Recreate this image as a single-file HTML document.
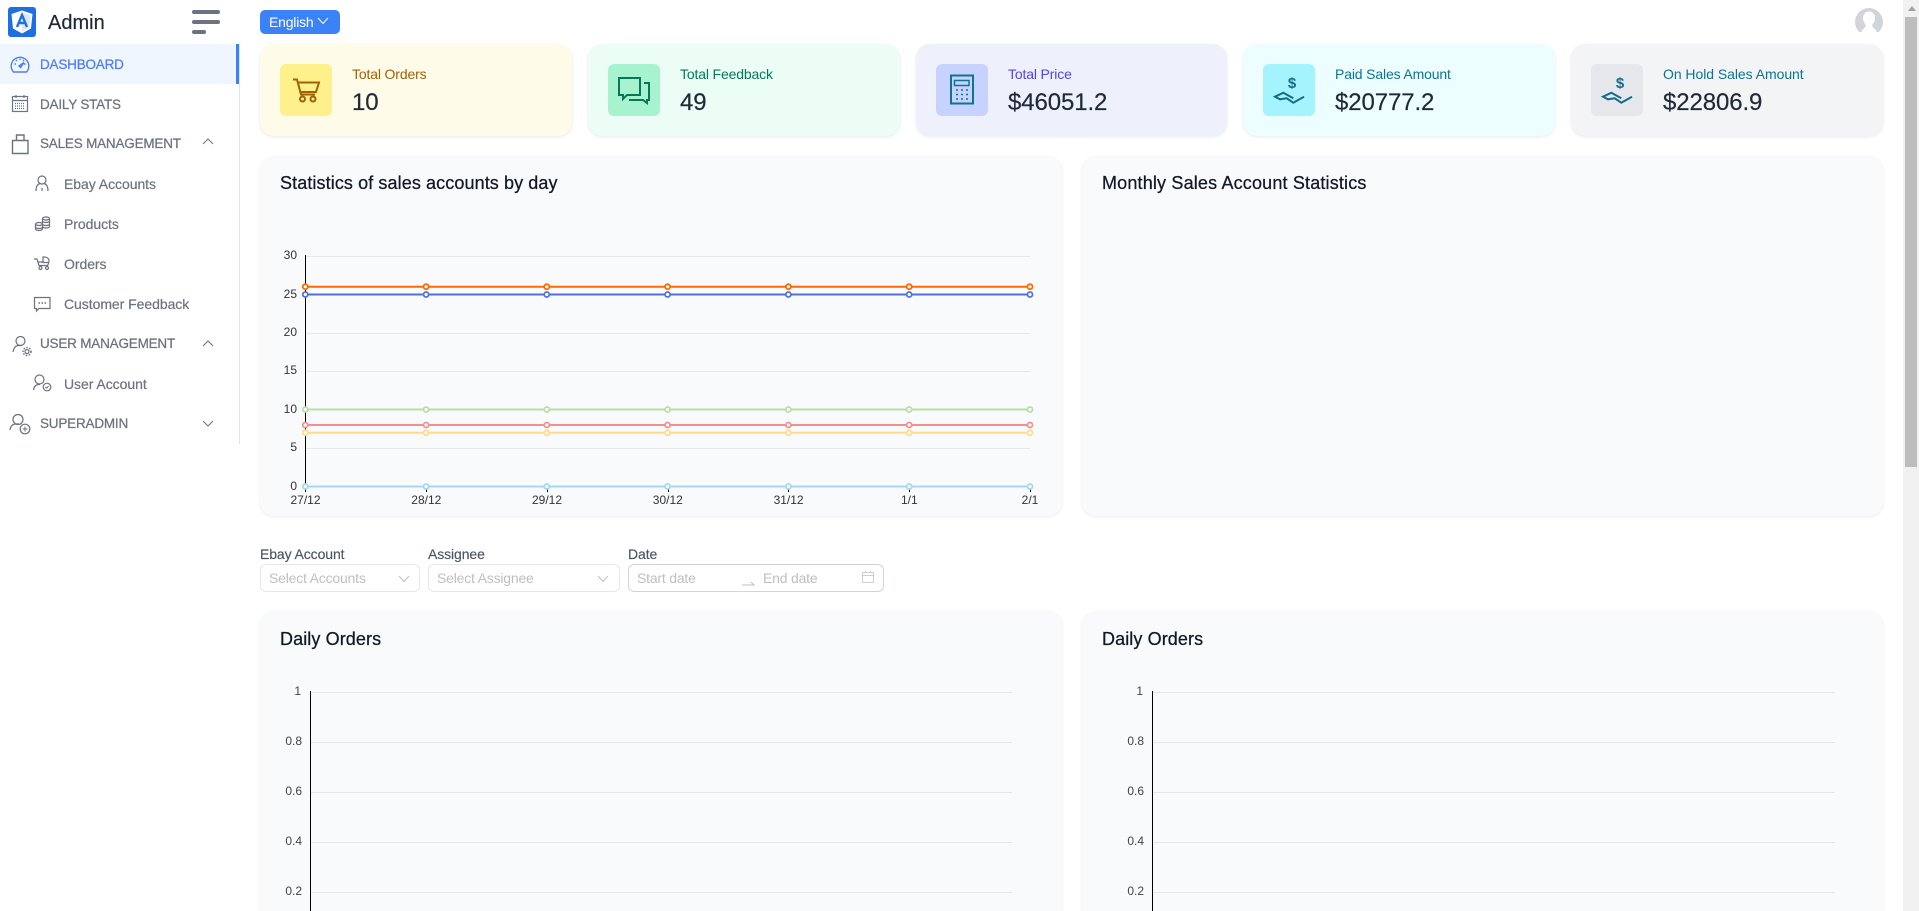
<!DOCTYPE html>
<html lang="en"><head><meta charset="utf-8"><title>Admin Dashboard</title>
<style>
*{box-sizing:border-box}
html,body{margin:0;padding:0;width:1919px;height:911px;overflow:hidden;background:#fff;font-family:"Liberation Sans",sans-serif;color:#1f2937}
#root{position:relative;width:1919px;height:911px;overflow:hidden;background:#fff}
.a{position:absolute}
.t{position:absolute;white-space:nowrap;line-height:20px;font-size:14px}
.nav{color:#6b7280;font-size:13.5px;letter-spacing:-.2px;-webkit-text-stroke:.25px}
.sub{color:#6b7280;font-size:14px;letter-spacing:-.05px;-webkit-text-stroke:.2px}
.card{position:absolute;top:44px;height:92px;border-radius:14px;box-shadow:0 1px 3px rgba(0,0,0,.09)}
.ic{position:absolute;left:20px;top:20px;width:52px;height:52px;border-radius:6px}
.ic svg{position:absolute;left:0;top:0}
.lb{position:absolute;left:92px;top:20px;font-size:14px;line-height:20px;white-space:nowrap;letter-spacing:-.15px}
.vl{position:absolute;left:92px;top:45px;font-size:24px;line-height:28px;white-space:nowrap;color:#1f2937;letter-spacing:-.1px;-webkit-text-stroke:.2px}
.panel{position:absolute;background:#f9fafb;border-radius:14px;box-shadow:0 1px 3px rgba(0,0,0,.08)}
.title{position:absolute;font-size:18px;line-height:24px;font-weight:400;color:#111827;white-space:nowrap;letter-spacing:.1px;-webkit-text-stroke:.25px}
.fl{position:absolute;top:544px;font-size:14px;line-height:20px;color:#4b5563;white-space:nowrap;letter-spacing:-.1px;-webkit-text-stroke:.15px}
.inp{position:absolute;top:564px;height:28px;border:1px solid #e5e7eb;border-radius:6px;background:#fff}
.ph{position:absolute;top:3px;font-size:14px;line-height:20px;color:#bfbfbf;white-space:nowrap;letter-spacing:-.2px}
svg{display:block;overflow:visible}
svg text{font-family:"Liberation Sans",sans-serif}
</style></head><body>
<div id="root">

<!-- Sidebar -->
<div class="a" style="left:239px;top:44px;width:1px;height:400px;background:#dbe5f5"></div>
<div class="a" style="left:0;top:44px;width:239px;height:40px;background:#eff6ff"></div>
<div class="a" style="left:236px;top:44px;width:3px;height:40px;background:#3b82f6"></div>

<svg class="a" style="left:8px;top:7px" width="28" height="30" viewBox="0 0 28 30">
<rect width="28" height="30" rx="3" fill="#1d6fe3"/>
<path d="M14 3.500 24.500 7 23 21.500 14 26.500 5 21.500 3.500 7Z" fill="#fff"/>
<path d="M14 5.500 22.500 8.500 21.200 20.300 14 24.300Z" fill="#dbe8fb"/>
<path d="M9 20 14 8l5 12M10.800 16h6.400" fill="none" stroke="#1d6fe3" stroke-width="2.400"/>
</svg>
<div class="t" style="left:48px;top:11px;font-size:20px;line-height:24px;color:#1f2937;-webkit-text-stroke:.2px">Admin</div>
<div class="a" style="left:192px;top:10px;width:28px;height:4px;border-radius:2px;background:#6b7280"></div>
<div class="a" style="left:192px;top:20px;width:28px;height:4px;border-radius:2px;background:#6b7280"></div>
<div class="a" style="left:192px;top:30px;width:14px;height:4px;border-radius:2px;background:#6b7280"></div>

<div class="t nav" style="left:40px;top:55px;color:#4f7cf7">DASHBOARD</div>
<div class="t nav" style="left:40px;top:95px">DAILY STATS</div>
<div class="t nav" style="left:40px;top:134px">SALES MANAGEMENT</div>
<div class="t sub" style="left:64px;top:174px">Ebay Accounts</div>
<div class="t sub" style="left:64px;top:214px">Products</div>
<div class="t sub" style="left:64px;top:254px">Orders</div>
<div class="t sub" style="left:64px;top:294px">Customer Feedback</div>
<div class="t nav" style="left:40px;top:334px">USER MANAGEMENT</div>
<div class="t sub" style="left:64px;top:374px">User Account</div>
<div class="t nav" style="left:40px;top:414px">SUPERADMIN</div>

<svg class="a" style="left:0;top:0" width="240" height="445" viewBox="0 0 240 445" fill="none" stroke="#6b7280" stroke-width="1.200">
<!-- gauge -->
<g stroke="#4f7cf7" stroke-width="1.400"><path d="M13.500 72a8.800 8.800 0 1 1 13 0Z"/><path d="M14.500 64h1.500M24 64h1.500M20 58.500v1.500M16 60l1 1M24 60l-1 1"/><path d="M19 66l5-3.500-3.500 5Z" fill="#4f7cf7"/></g>
<!-- calendar -->
<rect x="12.500" y="96.500" width="15" height="15"/><path d="M12.500 100.500h15M16 95v3M24 95v3"/><path d="M15 103.500h10M15 106h10M15 108.500h10" stroke-dasharray="1 1"/>
<!-- bag -->
<path d="M12.500 140.500h15.500v13h-15.500ZM16.500 140.500v-5.500h7.500v5.500" stroke-width="1.400"/>
<!-- chevrons -->
<path d="M203 144l5-5 5 5M203 346 208 341l5 5M203 421l5 5 5-5" stroke-width="1"/>
<!-- ebay user -->
<circle cx="42" cy="180" r="4"/><path d="M36 191c0-5 2-7 4-7.500M48 191c0-5-2-7-4-7.500M42 188v3" stroke-width="1.200"/>
<!-- products coins -->
<ellipse cx="46" cy="218.500" rx="3.500" ry="1.500"/><path d="M42.500 218.500v8c0 .8 1.500 1.500 3.500 1.500s3.500-.7 3.500-1.500v-8M42.500 221c0 .8 1.500 1.500 3.500 1.500s3.500-.7 3.500-1.500M42.500 224c0 .8 1.500 1.500 3.500 1.500s3.500-.7 3.500-1.500"/>
<ellipse cx="39" cy="224" rx="3.500" ry="1.500"/><path d="M35.500 224v5c0 .8 1.500 1.500 3.500 1.500s3.500-.7 3.500-1.500v-5M35.500 227c0 .8 1.500 1.500 3.500 1.500s3.500-.7 3.500-1.500"/>
<!-- orders stroller -->
<path d="M34 259h3l2 6.500h8.500c1-1.500 1.500-3 1.500-5.500a5 4 0 0 0-5-3h-1v5.500h6M38.200 262h5.800"/><circle cx="40.500" cy="268" r="1.500"/><circle cx="47" cy="268" r="1.500"/>
<!-- chat -->
<path d="M34.500 297.500h15.500v11h-11l-2.500 2.500v-2.500h-2Z" stroke-width="1.200"/><path d="M38.500 303h1.500M41.500 303h1.500M44.500 303h1.500" stroke-width="1.500"/>
<!-- user gear -->
<circle cx="20.500" cy="341" r="4.500"/><path d="M13 352c.5-4 2.500-6 5-6.500h4"/><circle cx="27" cy="351.500" r="2"/><circle cx="27" cy="351.500" r="4" stroke-dasharray="1.500 1.500" stroke-width="1.500"/>
<!-- user check -->
<circle cx="39.500" cy="379.500" r="4.500"/><path d="M33.500 390c.5-3.500 2-5 4.500-5.500h2"/><circle cx="47" cy="387" r="3.800"/><path d="M45.300 387l1.300 1.200 2-2.200" stroke-width="1"/>
<!-- user plus -->
<circle cx="18" cy="419.500" r="5"/><path d="M10 430c.5-4 2.500-5.500 5-6h4"/><circle cx="25" cy="429" r="4.800"/><path d="M25 426.500v5M22.500 429h5" stroke-width="1"/>
</svg>

<!-- Header -->
<div class="a" style="left:260px;top:10px;width:80px;height:24px;border-radius:5px;background:#3b82f6"></div>
<div class="t" style="left:269px;top:12px;color:#fff;letter-spacing:-.2px">English</div>
<svg class="a" style="left:317px;top:17px" width="12" height="8" viewBox="0 0 12 8" fill="none" stroke="#fff"><path d="M1 1l5 5.500 5-5.500"/></svg>
<svg class="a" style="left:1855px;top:8px" width="28" height="28" viewBox="0 0 28 28"><circle cx="14" cy="14" r="14" fill="#d1d5db"/><path d="M14 3.500c4 0 6 3 6 6.500 0 3-1.500 5-2.500 6.500-.8 1.500.5 3.500 3.500 5.500l1 4H6l1-4c3-2 4.300-4 3.500-5.500C9.500 15 8 13 8 10c0-3.500 2-6.500 6-6.500Z" fill="#fff"/><path d="M0 24h28v4H0Z" fill="#fff"/></svg>

<!-- Stat cards -->
<div class="card" style="left:260px;width:312px;background:#fefbe8">
 <div class="ic" style="background:#fef08a"><svg width="52" height="52" viewBox="0 0 52 52" fill="none" stroke="#a16207" stroke-width="2"><path d="M13 15.500h4l4 15h14M18 18.500h21l-3 9.500H20.500"/><circle cx="22.500" cy="35" r="2.500"/><circle cx="33" cy="35" r="2.500"/></svg></div>
 <div class="lb" style="color:#a16207">Total Orders</div><div class="vl">10</div>
</div>
<div class="card" style="left:588px;width:312px;background:#ecfdf5">
 <div class="ic" style="background:#a7f3d0"><svg width="52" height="52" viewBox="0 0 52 52" fill="none" stroke="#047857" stroke-width="2"><path d="M11 14h21v17H19l-4 4v-4h-4Z"/><path d="M36 19h5v17h-2v3l-4-3H21"/></svg></div>
 <div class="lb" style="color:#047857">Total Feedback</div><div class="vl">49</div>
</div>
<div class="card" style="left:916px;width:311px;background:#eef0fc">
 <div class="ic" style="background:#c7d2fe"><svg width="52" height="52" viewBox="0 0 52 52" fill="none" stroke="#0e7490" stroke-width="2"><rect x="15" y="11.500" width="22" height="28"/><rect x="18.500" y="16.500" width="14.500" height="5" stroke-width="1.500"/><path d="M20 26h2M25 26h2M30 26h2M20 30.500h2M25 30.500h2M30 30.500h2M20 35h2M25 35h2M30 35h2" stroke-width="1.600"/></svg></div>
 <div class="lb" style="color:#4f46e5">Total Price</div><div class="vl">$46051.2</div>
</div>
<div class="card" style="left:1243px;width:312px;background:#ecfeff">
 <div class="ic" style="background:#a5f3fc"><svg width="52" height="52" viewBox="0 0 52 52" fill="none" stroke="#146c8c" stroke-width="2"><path d="M30.300 34.300 20.300 28.700 12 32.700 17 35.300 23.700 34.300 30.300 38.700 41 32.700"/><text x="29" y="24" font-size="15" font-weight="700" text-anchor="middle" fill="#146c8c" stroke="none">$</text></svg></div>
 <div class="lb" style="color:#0e7490">Paid Sales Amount</div><div class="vl">$20777.2</div>
</div>
<div class="card" style="left:1571px;width:312px;background:#f3f4f6">
 <div class="ic" style="background:#e5e7eb"><svg width="52" height="52" viewBox="0 0 52 52" fill="none" stroke="#146c8c" stroke-width="2"><path d="M30.300 34.300 20.300 28.700 12 32.700 17 35.300 23.700 34.300 30.300 38.700 41 32.700"/><text x="29" y="24" font-size="15" font-weight="700" text-anchor="middle" fill="#146c8c" stroke="none">$</text></svg></div>
 <div class="lb" style="color:#0e7490;letter-spacing:-.05px">On Hold Sales Amount</div><div class="vl">$22806.9</div>
</div>

<!-- Chart panels -->
<div class="panel" style="left:260px;top:156px;width:802px;height:360px"></div>
<div class="panel" style="left:1082px;top:156px;width:801px;height:360px"></div>
<div class="title" style="left:280px;top:171px;letter-spacing:.1px">Statistics of sales accounts by day</div>
<div class="title" style="left:1102px;top:171px;letter-spacing:.17px">Monthly Sales Account Statistics</div>

<svg class="a" style="left:260px;top:156px" width="802" height="360" viewBox="260 156 802 360" fill="none">
<defs>
<g id="pts"><circle cx="305.300" cy="0" r="2.500"/><circle cx="426.100" cy="0" r="2.500"/><circle cx="546.800" cy="0" r="2.500"/><circle cx="667.600" cy="0" r="2.500"/><circle cx="788.400" cy="0" r="2.500"/><circle cx="909.200" cy="0" r="2.500"/><circle cx="1030" cy="0" r="2.500"/></g>
</defs>
<path d="M305 256.500H1030M305 333.500H1030M305 371.500H1030M305 409.500H1030M305 448.500H1030M305 294.500H1030" stroke="#e5e7eb"/>
<path d="M305.500 255V487" stroke="#000"/>
<path d="M305.500 487v5M426.500 487v5M547.500 487v5M668.500 487v5M788.500 487v5M909.500 487v5M1030.500 487v5" stroke="#000"/>
<path d="M305 486.500H1030" stroke="#a3d9ef" stroke-width="2"/><use href="#pts" y="486.500" stroke="#a3d9ef" stroke-width="1.800" fill="#fff"/>
<path d="M305 432.800H1030" stroke="#fedc8b" stroke-width="2"/><use href="#pts" y="432.800" stroke="#fedc8b" stroke-width="1.800" fill="#fff"/>
<path d="M305 425H1030" stroke="#f29090" stroke-width="2"/><use href="#pts" y="425" stroke="#f29090" stroke-width="1.800" fill="#fff"/>
<path d="M305 409.500H1030" stroke="#b7dfa6" stroke-width="2"/><use href="#pts" y="409.500" stroke="#b7dfa6" stroke-width="1.800" fill="#fff"/>
<path d="M305 294.500H1030" stroke="#5470d6" stroke-width="2"/><use href="#pts" y="294.500" stroke="#5470d6" stroke-width="1.800" fill="#fff"/>
<path d="M305 286.700H1030" stroke="#ff6a00" stroke-width="2"/><use href="#pts" y="286.700" stroke="#ff6a00" stroke-width="1.800" fill="#fff"/>
<g fill="#333" font-size="12" text-anchor="end">
<text x="297" y="259">30</text><text x="297" y="298">25</text><text x="297" y="336">20</text><text x="297" y="374">15</text><text x="297" y="413">10</text><text x="297" y="451">5</text><text x="297" y="490">0</text>
</g>
<g fill="#333" font-size="12" text-anchor="middle">
<text x="305.500" y="504">27/12</text><text x="426.300" y="504">28/12</text><text x="547" y="504">29/12</text><text x="667.800" y="504">30/12</text><text x="788.600" y="504">31/12</text><text x="909.300" y="504">1/1</text><text x="1030" y="504">2/1</text>
</g>
</svg>

<!-- Filters -->
<div class="fl" style="left:260px">Ebay Account</div>
<div class="fl" style="left:428px">Assignee</div>
<div class="fl" style="left:628px">Date</div>
<div class="inp" style="left:260px;width:160px"><div class="ph" style="left:8px">Select Accounts</div>
<svg class="a" style="left:137px;top:10px" width="12" height="8" viewBox="0 0 12 8" fill="none" stroke="#bfbfbf"><path d="M1 1l5 5.500 5-5.500"/></svg></div>
<div class="inp" style="left:428px;width:192px"><div class="ph" style="left:8px">Select Assignee</div>
<svg class="a" style="left:168px;top:10px" width="12" height="8" viewBox="0 0 12 8" fill="none" stroke="#bfbfbf"><path d="M1 1l5 5.500 5-5.500"/></svg></div>
<div class="inp" style="left:628px;width:256px;border-color:#d1d5db"><div class="ph" style="left:8px">Start date</div><div class="ph" style="left:134px">End date</div>
<svg class="a" style="left:112px;top:13px" width="14" height="8" viewBox="0 0 14 8" fill="none" stroke="#bfbfbf"><path d="M1 7h12l-3-3"/></svg>
<svg class="a" style="left:232px;top:5px" width="14" height="14" viewBox="0 0 14 14" fill="none" stroke="#d0d0d0"><rect x="1.500" y="2.500" width="11" height="10"/><path d="M1.500 5.500h11M4.500 1v2M9.500 1v2"/></svg></div>

<!-- Daily panels -->
<div class="panel" style="left:260px;top:611px;width:802px;height:320px"></div>
<div class="panel" style="left:1082px;top:611px;width:801px;height:320px"></div>
<div class="title" style="left:280px;top:627px;letter-spacing:.1px">Daily Orders</div>
<div class="title" style="left:1102px;top:627px;letter-spacing:.1px">Daily Orders</div>

<svg class="a" style="left:0;top:0" width="1919" height="911" viewBox="0 0 1919 911" fill="none">
<path d="M310 692.500H1012M310 742.500H1012M310 792.500H1012M310 842.500H1012M310 892.500H1012" stroke="#e5e7eb"/>
<path d="M310.500 691V911" stroke="#000"/>
<path d="M1152 692.500H1835M1152 742.500H1835M1152 792.500H1835M1152 842.500H1835M1152 892.500H1835" stroke="#e5e7eb"/>
<path d="M1152.500 691V911" stroke="#000"/>
<g fill="#444" font-size="12" text-anchor="end">
<text x="301" y="695">1</text><text x="302" y="745">0.8</text><text x="302" y="795">0.6</text><text x="302" y="845">0.4</text><text x="302" y="895">0.2</text>
<text x="1143" y="695">1</text><text x="1144" y="745">0.8</text><text x="1144" y="795">0.6</text><text x="1144" y="845">0.4</text><text x="1144" y="895">0.2</text>
</g>
</svg>

<!-- Scrollbar -->
<div class="a" style="left:1903px;top:0;width:16px;height:911px;background:#f1f1f1"></div>
<div class="a" style="left:1905px;top:17px;width:12px;height:450px;background:#bdbdbd"></div>
<svg class="a" style="left:1907px;top:6px" width="10" height="6" viewBox="0 0 10 6"><path d="M5 0l4 5H1Z" fill="#a3a3a3"/></svg>
</div>
</body></html>
